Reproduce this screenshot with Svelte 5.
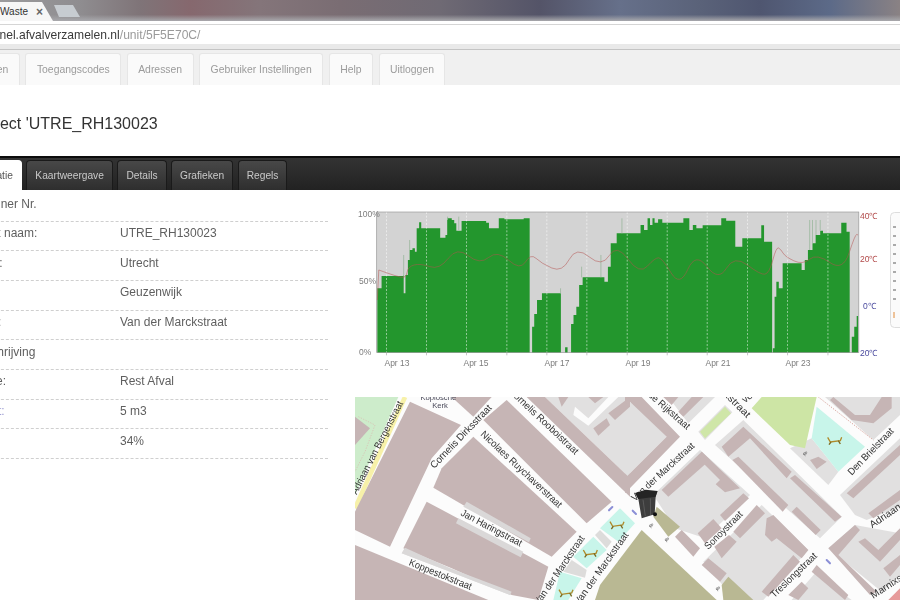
<script>
  const navItems = ['Eenheden', 'Toegangscodes', 'Adressen', 'Gebruiker Instellingen', 'Help', 'Uitloggen']
  const tabs = ['Locatie', 'Kaartweergave', 'Details', 'Grafieken', 'Regels']

  const rows = [
    ['Container Nr.', ''],
    ['Object naam:', 'UTRE_RH130023'],
    ['Plaats:', 'Utrecht'],
    ['Wijk:', 'Geuzenwijk'],
    ['Straat:', 'Van der Marckstraat'],
    ['Omschrijving', ''],
    ['Fractie:', 'Rest Afval'],
    ['Omvat:', '5 m3', true],
    ['Bezet:', '34%']
  ]

  // fill level as [x, top] steps, in chart units
  const levels = [
    [[78, 265], [90, 228], [152, 225], [153, 280], [158, 225], [165, 180], [170, 150], [178, 145], [185, 155], [190, 85], [197, 67], [203, 85], [257, 113], [272, 105], [277, 55], [290, 60], [297, 70], [303, 92], [318, 63], [388, 68], [396, 85], [424, 55], [440, 58], [495, 55], [512, 55]],
    [[519, 380], [525, 342], [533, 300], [547, 280], [601, 280]],
    [[613, 442], [620, 458], [630, 372], [637, 345], [645, 320], [653, 255], [663, 232], [722, 232], [725, 245], [735, 200], [743, 130], [760, 100], [828, 75], [838, 90], [848, 55], [855, 75], [862, 55], [868, 68], [878, 58], [890, 68], [950, 55], [967, 90], [977, 75], [987, 85], [1005, 76], [1058, 55], [1072, 62], [1098, 140], [1118, 115], [1172, 76], [1180, 125], [1203, 130]],
    [[1205, 445], [1210, 290], [1215, 245], [1222, 265], [1233, 190], [1287, 210], [1296, 180], [1305, 150], [1318, 130], [1327, 105], [1340, 92], [1348, 100], [1400, 68], [1415, 95], [1424, 95]],
    [[1430, 410], [1437, 380], [1444, 348], [1448, 348]]
  ]
  const base = 458

  function stepPath(steps) {
    let d = `M${steps[0][0]} ${base}`
    let prev = null
    for (const [x, y] of steps) {
      if (prev !== null) d += `L${x} ${prev}`
      d += `L${x} ${y}`
      prev = y
    }
    return d + `L${steps[steps.length - 1][0]} ${base}Z`
  }

  // rounds the corners off a polyline
  function smooth(pts) {
    let d = `M${pts[0][0]} ${pts[0][1]}L${pts[1][0]} ${pts[1][1]}`
    for (let i = 1; i < pts.length - 1; i++) {
      const mx = (pts[i][0] + pts[i + 1][0]) / 2
      const my = (pts[i][1] + pts[i + 1][1]) / 2
      d += `Q${pts[i][0]} ${pts[i][1]} ${mx} ${my}`
    }
    const last = pts[pts.length - 1]
    return d + `L${last[0]} ${last[1]}`
  }

  const spikes = [[153, 165, 225], [170, 120, 150], [278, 50, 60], [310, 50, 90], [600, 265, 280], [660, 200, 232], [715, 165, 232], [775, 55, 100], [1310, 60, 150], [1318, 60, 130], [1328, 60, 105], [1340, 60, 92]]
  const temp = [[78, 300], [82, 210], [130, 228], [160, 235], [165, 200], [200, 190], [255, 210], [305, 140], [370, 195], [420, 150], [485, 212], [515, 160], [545, 190], [605, 218], [645, 138], [718, 203], [760, 130], [825, 225], [870, 172], [890, 175], [940, 262], [985, 155], [1050, 245], [1095, 165], [1170, 225], [1195, 220], [1215, 140], [1228, 148], [1240, 170], [1290, 195], [1330, 160], [1405, 215], [1440, 102], [1448, 105]]
  const grid = [104, 218, 332, 447, 561, 675, 790, 904, 1018, 1133, 1247, 1362]
  const dates = [['Apr 13', 397], ['Apr 15', 476], ['Apr 17', 557], ['Apr 19', 638], ['Apr 21', 718], ['Apr 23', 798]]
  const legendRows = [0, 1, 2, 3, 4, 5, 6, 7, 8]

  // street names, start and end of the baseline in map units
  const streets = [
    ['Adriaan van Bergenstraat', 5, 300, 145, 25],
    ['Cornelis Dirksstraat', 238, 222, 412, 40],
    ['Cornelis Rooboistraat', 460, -8, 660, 180],
    ['Nicolaes Ruychaverstraat', 375, 120, 610, 340],
    ['Jan Haringstraat', 315, 360, 495, 455],
    ['Koppestokstraat', 160, 510, 345, 585],
    ['Van der Marckstraat', 552, 632, 690, 430],
    ['Van der Marckstraat', 672, 632, 822, 420],
    ['Van der Marckstraat', 840, 320, 1020, 155],
    ['Pieter de Rijkstraat', 816, -51, 995, 105],
    ['Jutstraat', 1085, -20, 1175, 70],
    ['vo', 1170, 25, 1195, 5],
    ['Den Brielstraat', 1490, 242, 1618, 110],
    ['Sonoystraat', 1060, 465, 1165, 360],
    ['Treslongstraat', 1258, 610, 1388, 485],
    ['Adriaan', 1552, 400, 1640, 340],
    ['Marnixstraat', 1555, 612, 1695, 520]
  ].map(([name, x1, y1, x2, y2]) => ({
    name, x1, y1,
    angle: Math.atan2(y2 - y1, x2 - x1) * 180 / Math.PI,
    len: Math.hypot(x2 - x1, y2 - y1)
  }))

  // west half of the map
  const westLots = [
    '570,6 825,6 825,250',
    '150,458 285,520 470,590 465,600 285,530 140,475'
  ]
  const westBuildings = [
    '165,20 318,90 230,190 105,455 0,405 0,350',
    '290,6 410,6 355,65',
    '455,15 770,320 695,385 385,75',
    '515,6 570,6 825,250 825,305',
    '355,125 665,410 590,485 235,278 260,220',
    '215,320 580,515 550,615 470,600 290,520 145,460',
    '0,450 400,615 0,615',
    '715,100 755,70 765,90 730,122',
    '760,55 825,6 825,35 780,75',
    '610,6 640,6 620,35',
    '700,6 745,6 720,25',
    '0,65 45,100 0,150'
  ]
  const westStrips = [
    '335,320 527,430 522,442 325,335',
    '310,370 505,470 497,487 303,385',
    '150,458 285,520 470,590 465,600 285,530 140,475'
  ]

  // east half, drawn 810 units further on
  const eastLots = [
    '0,30 20,20 125,125 0,250',
    '130,6 270,6 205,70 190,85',
    '85,300 225,165 375,300 240,430 150,400',
    '235,500 410,330 550,465 415,615 330,615',
    '270,150 355,75 650,365 585,430',
    '495,160 560,130 640,230 610,270',
    '600,6 825,6 825,60 745,135',
    '645,300 825,130 825,335 725,375 690,360',
    '610,460 690,390 825,415 825,540 770,590',
    '500,615 570,535 680,615',
    '220,110 300,30 322,52 240,135'
  ]
  const eastBuildings = [
    '0,6 50,6 165,125 0,295 0,250 125,125 15,20 0,30',
    '115,6 160,6 140,30',
    '200,6 235,6 175,65 160,50',
    '110,285 230,170 255,195 130,305',
    '230,170 345,280 300,292 272,268 285,255 225,195',
    '285,360 355,295 372,310 300,378',
    '218,415 265,372 290,400 240,445',
    '150,425 170,405 225,460 205,485',
    '268,455 312,420 335,440 290,490',
    '325,410 395,330 420,355 345,430',
    '230,510 250,490 305,535 285,560',
    '425,370 445,360 550,465 530,490 455,430 440,440 420,420',
    '410,590 505,480 525,500 430,605',
    '290,155 355,95 500,230 485,250 375,130 310,185',
    '322,195 340,185 490,330 473,350',
    '495,250 510,240 650,365 630,380',
    '500,350 515,335 587,405 572,420',
    '555,195 580,185 605,200 575,222',
    '625,6 690,60 735,60 770,6 800,6 800,40 745,85 680,75 615,15',
    '665,295 825,150 825,180 685,310',
    '730,355 825,285 825,315 745,370',
    '610,460 690,390 705,405 640,480 755,590 735,600',
    '700,440 720,430 760,465 825,400 825,435 765,500',
    '775,520 825,480 825,510 795,545',
    '560,530 575,510 670,600 660,615',
    '490,600 530,560 550,580 520,615'
  ]

  const playgrounds = ['795,340 840,385 790,440 735,400', '715,425 755,465 695,520 655,485', '615,530 680,550 640,615 595,615']
  const paved = ['735,405 770,440 755,460 720,420', '650,495 695,525 690,548 625,530']
  const olive = ['860,405 1085,615 720,615 735,570', '905,335 975,395 940,425 895,365', '1120,545 1195,615 1105,615 1100,570']
  const swings = [[785, 388], [705, 473], [632, 592], [1438, 135]]
  const marks = [[885, 396], [932, 438], [1085, 585], [1347, 180]]
  const arrows = [[767, 341, -45], [838, 352, 45], [1420, 500, 45]]
</script>

<div class="page">
  <div class="titlebar">
    <div class="browser-tab"><span class="tab-title">Waste</span><span class="tab-close">×</span></div>
    <div class="new-tab"></div>
  </div>

  <div class="addressbar">
    <div class="url"><span class="host">panel.afvalverzamelen.nl</span>/unit/5F5E70C/</div>
  </div>

  <nav class="topnav">
    {#each navItems as item}
      <span class="nav-item">{item}</span>
    {/each}
  </nav>

  <h1>Object 'UTRE_RH130023</h1>

  <div class="tabbar">
    {#each tabs as tab, i}
      <span class="tab" class:active={i === 0}>{tab}</span>
    {/each}
  </div>

  <div class="content">
    <div class="info">
      {#each rows as row}
        <div class="row">
          <span class="label" class:link={row[2]}>{row[0]}</span>
          <span>{row[1]}</span>
        </div>
      {/each}
    </div>

    <div class="side">
      <svg class="chart" width="545" height="190" viewBox="0 0 545 190">
        <g transform="translate(-5 0) scale(0.3509 0.3333)">
          <rect x="76" y="36" width="1374" height="422" fill="#d3d3d3" />
          {#each levels as steps}
            <path d={stepPath(steps)} fill="#23962d" />
          {/each}
          {#each spikes as s}
            <line x1={s[0]} y1={s[1]} x2={s[0]} y2={s[2]} stroke="#9db9a0" stroke-width="2.5" />
          {/each}
          {#each grid as x}
            <line x1={x} y1="36" x2={x} y2="458" stroke="#fff" stroke-width="2" stroke-dasharray="6 5" opacity="0.75" />
            <line x1={x} y1="458" x2={x} y2="466" stroke="#aaa" stroke-width="2" />
          {/each}
          <path d={smooth(temp)} fill="none" stroke="#b5504f" stroke-width="2.5" opacity="0.6" />
          <rect x="76" y="36" width="1374" height="422" fill="none" stroke="#999" stroke-width="2" />
        </g>
        <g class="axis">
          <text x="3" y="17">100%</text>
          <text x="4" y="84">50%</text>
          <text x="4" y="155">0%</text>
          {#each dates as d}
            <text x={d[1] - 355} y="166" text-anchor="middle">{d[0]}</text>
          {/each}
          <text class="warm" x="505" y="19">40℃</text>
          <text class="warm" x="505" y="62">20℃</text>
          <text class="cold" x="508" y="109">0℃</text>
          <text class="cold" x="505" y="156">20℃</text>
        </g>
        <rect x="535.5" y="12.5" width="30" height="115" rx="4" fill="#fbfbfb" stroke="#ddd" />
        {#each legendRows as r}
          <rect x="538" y={26 + r * 9} width="3" height="2" fill="#aaa" />
        {/each}
        <rect x="538" y="112" width="2" height="6" fill="#eec39a" />
      </svg>

      <svg class="map" width="545" height="203" viewBox="0 6 1635 609">
        <rect y="6" width="1635" height="609" fill="#fcfcfc" />
        <polygon points="0,6 130,6 0,300" fill="#cdeccb" />
        <line x1="150" y1="6" x2="0" y2="340" stroke="#f7f1a9" stroke-width="14" />
        <path d="M10 65 L60 90 L30 170 L0 230" fill="none" stroke="#d9b6ae" stroke-width="2" stroke-dasharray="4 4" />

        {#each westLots as p}
          <polygon points={p} fill="#e1e0e0" />
        {/each}
        <g transform="translate(810 0)">
          {#each eastLots as p}
            <polygon points={p} fill="#e1e0e0" />
          {/each}
        </g>
        <path d="M660 35 L700 70 L760 6 L790 6 L700 92 L655 60 Z" fill="#fcfcfc" />

        {#each westBuildings as p}
          <polygon points={p} fill="#c6b5b5" />
        {/each}
        {#each westStrips as p}
          <polygon points={p} fill="#dad8d8" />
        {/each}
        <g transform="translate(810 0)">
          {#each eastBuildings as p}
            <polygon points={p} fill="#c6b5b5" />
          {/each}
          <polygon points="225,110 300,35 318,55 240,130" fill="#cfe6a8" />
          <polygon points="380,40 410,6 575,6 540,160 495,150" fill="#cde5a5" />
          <polygon points="575,35 720,155 640,230 560,130" fill="#c8f5ea" />
          <line x1="580" y1="6" x2="745" y2="135" stroke="#d9a8a0" stroke-width="3" stroke-dasharray="4 4" />
          <polygon points="790,615 825,580 825,615" fill="#e69a9a" />
        </g>

        {#each olive as p}
          <polygon points={p} fill="#b9b893" />
        {/each}
        {#each playgrounds as p}
          <polygon points={p} fill="#c8f5ea" />
        {/each}
        {#each paved as p}
          <polygon points={p} fill="#dddcdb" />
        {/each}

        {#each swings as s}
          <g transform="translate({s[0]} {s[1]})" fill="none" stroke="#b08a2a" stroke-width="4">
            <path d="M-20 -8 L-12 6 L18 2 L22 -8" />
            <path d="M-10 6 L-16 14 M12 2 L18 12" stroke="#7c6a20" />
          </g>
        {/each}
        {#each arrows as a}
          <rect x="-10" y="-3" width="20" height="6" rx="3" fill="#8b8fd6" transform="translate({a[0]} {a[1]}) rotate({a[2]})" />
        {/each}

        {#each streets as s}
          <text class="street" textLength={s.len} lengthAdjust="spacingAndGlyphs" transform="translate({s.x1} {s.y1}) rotate({s.angle})">{s.name}</text>
        {/each}
        <text class="poi" x="250" y="14" text-anchor="middle">Kopiosche</text>
        <text class="poi" x="255" y="40" text-anchor="middle">Kerk</text>
        {#each marks as m}
          <text class="mark" x={m[0]} y={m[1]} text-anchor="middle" transform="rotate(45 {m[0]} {m[1]})">&amp;</text>
        {/each}

        <!-- container marker -->
        <g>
          <path d="M843 298 L906 288 L902 305 L899 358 L860 370 L850 312 Z" fill="#3d3d3d" />
          <path d="M840 294 L872 284 L908 288 L902 305 L850 312 Z" fill="#242424" />
          <path d="M864 314 L871 364 M886 310 L887 360" stroke="#5a5a5a" stroke-width="3" fill="none" />
          <circle cx="900" cy="358" r="6" fill="#111" />
        </g>
      </svg>
    </div>
  </div>
</div>

<style>
  :global(body) {
    margin: 0;
    background: #fff;
  }

  .page {
    width: 900px;
    height: 600px;
    overflow: hidden;
    font-family: "Liberation Sans", Arial, sans-serif;
    color: #5f5f5f;
    filter: blur(0.35px);
  }

  .titlebar {
    height: 21px;
    display: flex;
    align-items: flex-end;
    background:
      linear-gradient(180deg, transparent 70%, #a9a9ad 100%),
      linear-gradient(90deg, #9a9a9c 0, #8f8d90 80px, #7f7478 140px, #86686e 190px, #84757a 260px, #7a6d73 340px, #6f6a74 440px, #545468 540px, #66708a 620px, #5a6279 700px, #4f5670 760px, #5c6a88 830px, #8a8284 900px);
  }

  .browser-tab {
    width: 53px;
    height: 19px;
    box-sizing: border-box;
    padding-right: 8px;
    display: flex;
    justify-content: space-between;
    align-items: center;
    background: #f6f6f6;
    clip-path: polygon(0 0, 42px 0, 53px 100%, 0 100%);
    font-size: 10px;
    color: #333;
  }

  .tab-close {
    margin-right: 2px;
    font-size: 12px;
    font-weight: bold;
    color: #666;
  }

  .new-tab {
    width: 26px;
    height: 12px;
    margin: 0 0 4px 1px;
    background: #c7ccd1;
    clip-path: polygon(0 0, 19px 0, 26px 100%, 5px 100%);
  }

  .addressbar {
    height: 29px;
    box-sizing: border-box;
    padding-top: 4px;
    background: linear-gradient(180deg, #fff 4px, #e9e9e9 4px);
    border-bottom: 1px solid #c4c4c4;
  }

  .url {
    height: 19px;
    margin-left: -14px;
    padding-top: 1px;
    box-sizing: border-box;
    background: #fff;
    font-size: 12.1px;
    line-height: 19px;
    color: #9a9a9a;
    box-shadow: 0 -1px 0 #d5d5d5;
  }

  .host {
    color: #3a3a3a;
  }

  .topnav {
    height: 35px;
    box-sizing: border-box;
    display: flex;
    gap: 5.5px;
    align-items: flex-end;
    margin-left: -50.5px;
    background: #f0f0f0;
  }

  .nav-item {
    height: 32px;
    box-sizing: border-box;
    padding: 0 10.5px;
    display: flex;
    align-items: center;
    background: #fafafa;
    border: 1px solid #e6e6e6;
    border-bottom: 0;
    border-radius: 3px 3px 0 0;
    font-size: 10.4px;
    color: #9b9b9b;
  }

  h1 {
    height: 71px;
    margin: 0 0 0 -25px;
    font-size: 16px;
    font-weight: normal;
    line-height: 77px;
    color: #333;
  }

  .tabbar {
    height: 34px;
    box-sizing: border-box;
    display: flex;
    gap: 4.5px;
    align-items: flex-end;
    margin-left: -29px;
    background: linear-gradient(180deg, #333 0, #222 100%);
    border-top: 2px solid #0c0c0c;
  }

  .tab {
    height: 30px;
    box-sizing: border-box;
    padding: 0 8px;
    display: flex;
    align-items: center;
    background: linear-gradient(180deg, #484848 0, #2e2e2e 100%);
    border: 1px solid #1a1a1a;
    border-bottom: 0;
    border-radius: 4px 4px 0 0;
    font-size: 10.2px;
    color: #c9c9c9;
  }

  .tab.active {
    background: #fff;
    border-color: #fff;
    color: #555;
  }

  .content {
    display: grid;
    grid-template-columns: 355px 545px;
  }

  .info {
    width: 362px;
    margin-left: -34px;
    padding-top: 2px;
  }

  .row {
    height: 29.67px;
    box-sizing: border-box;
    display: grid;
    grid-template-columns: 154px 1fr;
    padding-top: 4.5px;
    border-bottom: 1px dashed #cfcfcf;
    font-size: 12px;
    line-height: 15px;
  }

  .label.link {
    color: #9c9cd2;
  }

  .side {
    padding-top: 10px;
  }

  .chart,
  .map {
    display: block;
  }

  .map {
    margin-top: 7px;
  }

  .axis text {
    font-size: 8.5px;
    fill: #7c7c7c;
  }

  .axis .warm {
    fill: #b24a4a;
  }

  .axis .cold {
    fill: #4a4a9e;
  }

  .street {
    font-size: 30px;
    fill: #333;
  }

  .poi {
    font-size: 23px;
    fill: #4a4a5a;
  }

  .mark {
    font-size: 18px;
    fill: #555;
  }
</style>
